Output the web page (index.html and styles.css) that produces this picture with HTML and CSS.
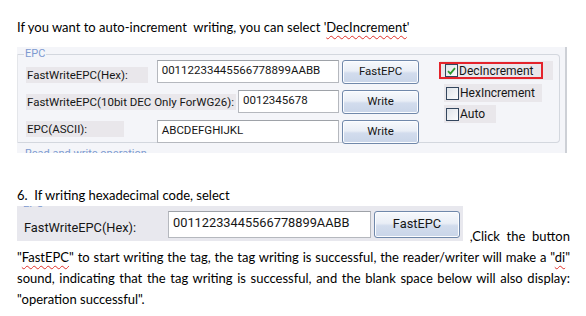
FILE: index.html
```html
<!DOCTYPE html>
<html>
<head>
  <title>Auto-increment writing</title>
  <link rel="stylesheet" href="styles.css">
</head>
<body>
  <p class="doc-line intro">If you want to auto-increment&nbsp; writing, you can select '<span class="typo">DecIncrement</span>'</p>

  <div class="shot shot-epc">
    <fieldset class="group">
      <legend>EPC</legend>
      <div class="group-body">
        <div class="fields">
          <div class="row">
            <span class="lbl lbl-low w-hex">FastWriteEPC(Hex):</span>
            <span class="box box-wide">00112233445566778899AABB</span>
            <span class="btn">FastEPC</span>
          </div>
          <div class="row">
            <span class="lbl lbl-mid w-dec">FastWriteEPC(10bit DEC Only ForWG26):</span>
            <span class="box box-short">0012345678</span>
            <span class="btn">Write</span>
          </div>
          <div class="row">
            <span class="lbl lbl-top w-ascii">EPC(ASCII):</span>
            <span class="box box-wide">ABCDEFGHIJKL</span>
            <span class="btn">Write</span>
          </div>
        </div>
        <div class="checks">
          <div class="check check-dec">
            <span class="marked"><span class="tick checked"><svg width="9" height="8" viewBox="0 0 9 8"><path d="M1 4.2 L3.4 6.6 L8 1.2" fill="none" stroke="#2e9a2e" stroke-width="1.8"/></svg></span>DecIncrement</span>
          </div>
          <div class="check check-hex"><span class="tick"></span>HexIncrement</div>
          <div class="check check-auto"><span class="tick"></span>Auto</div>
        </div>
      </div>
    </fieldset>
    <div class="cut-caption">Read and write operation</div>
  </div>

  <p class="doc-line step">6.&nbsp; If writing hexadecimal code, select</p>
  <p class="doc-line body-text"><span class="shot shot-hex"><span class="cut-legend">EPC</span><span class="hex-row"><span class="lbl-big">FastWriteEPC(Hex):</span><span class="box box-big">00112233445566778899AABB</span><span class="btn btn-big">FastEPC</span></span></span> ,Click the button "<span class="typo">FastEPC</span>" to start writing the tag, the tag writing is successful, the reader/writer will make a "<span class="typo">di</span>" sound, indicating that the tag writing is successful, and the blank space below will also display: "operation successful".</p>
</body>
</html>
```

FILE: styles.css
```css
body {
  margin: 0;
  padding: 0;
  background: #fff;
  color: #000;
  font-family: Lato, "Open Sans", sans-serif;
}

.doc-line {
  margin: 0;
  padding: 0 16px 0 17px;
  font-size: 13px;
  line-height: 21px;
}

.intro {
  padding-top: 17px;
}

.step {
  padding-top: 32px;
}

.body-text {
  text-align: justify;
}

.typo {
  text-decoration: underline wavy #e0302a;
  text-decoration-thickness: 1px;
  text-underline-offset: 3px;
}

/* screenshot of the reader software */
.shot {
  font-family: Roboto, "Noto Sans", sans-serif;
  color: #161616;
  overflow: hidden;
}

.shot-epc {
  margin: 9px 0 0 17px;
  width: 548px;
  height: 106px;
  background: #f4f5f9;
  border-right: 2px solid #cdd0d6;
}

.group {
  margin: 0;
  padding: 0 0 0 8px;
  width: 533px;
  height: 94px;
  box-sizing: content-box;
  border: 1px solid #d3d7de;
  border-left-color: #e4e6ea;
  border-radius: 0 4px 4px 0;
}

.group legend {
  padding: 0 1px;
  margin-left: -2px;
  font-size: 11px;
  line-height: 14px;
  color: #7d9ad0;
}

.group-body {
  display: flex;
  margin-top: -1px;
}

.fields {
  display: flex;
  flex-direction: column;
  gap: 6px;
  width: 393px;
}

.row {
  display: flex;
  height: 24px;
}

.lbl {
  height: 16px;
  line-height: 16px;
  background: #e9e7eb;
  font-size: 11.5px;
  padding-left: 1px;
  white-space: nowrap;
}

.lbl-low { align-self: flex-end; margin-bottom: 1px; }
.lbl-mid { align-self: center; }
.lbl-top { align-self: flex-start; margin-top: 1px; }

.w-hex { width: 121px; margin-right: 9px; }
.w-dec { width: 209px; margin-right: 2px; }
.w-ascii { width: 97px; margin-right: 33px; }

.box {
  height: 23px;
  box-sizing: border-box;
  background: #fff;
  border: 1px solid #b5b8be;
  border-top-color: #9ea2a8;
  font-size: 11.5px;
  line-height: 19px;
  padding-left: 4px;
}

.box-wide { width: 183px; }
.box-short { width: 101px; }

.btn {
  margin-left: 3px;
  width: 77px;
  height: 24px;
  box-sizing: border-box;
  border: 1px solid #7088aa;
  border-radius: 3px;
  background: linear-gradient(#f7f9fc, #e9eef6 45%, #d2dced 55%, #c9d5e8);
  box-shadow: inset 0 0 0 1px #fcfdff;
  text-align: center;
  font-size: 11.5px;
  line-height: 21px;
}

.checks {
  margin-left: 21px;
  display: flex;
  flex-direction: column;
  padding-top: 1px;
}

.check {
  display: flex;
  align-items: center;
  height: 18px;
  background: #e9e7eb;
  font-size: 12px;
  white-space: nowrap;
  padding-left: 2px;
}

.check-dec {
  width: 113px;
  height: 19px;
  padding-left: 0;
  margin-bottom: 4px;
}

.check-hex {
  margin-left: 4px;
  width: 96px;
  margin-bottom: 3px;
}

.check-auto {
  margin-left: 4px;
  width: 50px;
}

.marked {
  display: flex;
  align-items: center;
  height: 17px;
  width: 104px;
  box-sizing: border-box;
  border: 2px solid #e4232b;
  margin-left: -1px;
  padding-left: 4px;
}

.tick {
  display: flex;
  align-items: center;
  justify-content: center;
  width: 13px;
  height: 13px;
  box-sizing: border-box;
  border: 1px solid #33465e;
  background: linear-gradient(135deg, #dfe3e9, #fbfcfd);
  margin-right: 1px;
}

.cut-caption {
  margin: 4px 0 0 8px;
  font-size: 11px;
  line-height: 14px;
  color: #7d9ad0;
}

/* second capture, sits inline in the paragraph */
.shot-hex {
  display: inline-block;
  vertical-align: baseline;
  width: 446px;
  height: 35px;
  background: #e8e8ee;
}

.cut-legend {
  display: block;
  margin: -9px 0 0 6px;
  height: 14px;
  font-size: 11px;
  line-height: 14px;
  color: #7d9ad0;
}

.hex-row {
  display: flex;
  align-items: center;
  padding-left: 7px;
}

.lbl-big {
  width: 144px;
  font-size: 12.8px;
  line-height: 18px;
  margin-top: 6px;
}

.box-big {
  width: 203px;
  height: 27px;
  font-size: 12.8px;
  line-height: 21px;
  padding-left: 4px;
}

.btn-big {
  width: 86px;
  height: 27px;
  font-size: 12.8px;
  line-height: 24px;
}
```
